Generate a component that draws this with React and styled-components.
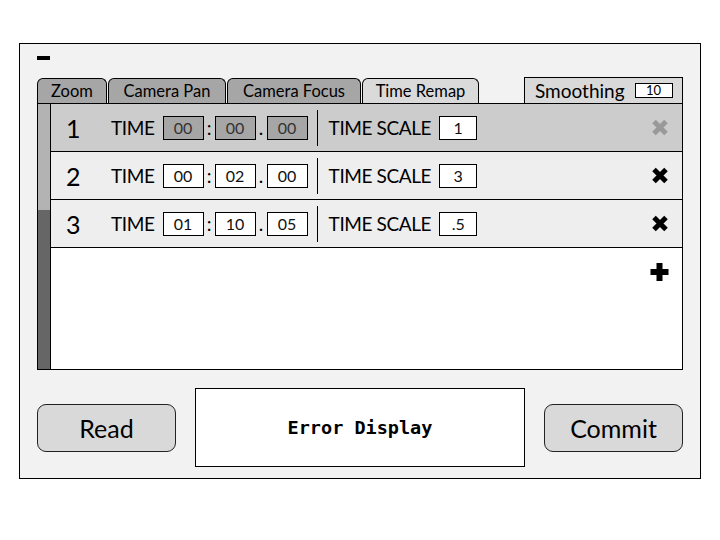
import React from "react";
import styled, { createGlobalStyle } from "styled-components";

const GlobalStyle = createGlobalStyle`
    body {
        margin: 0;
        background: #ffffff;
        font-family: "Lato", "Noto Sans", sans-serif;
        color: #000;
    }
`;

const rows = [
    { id: 1, time: ["00", "00", "00"], scale: "1", selected: true },
    { id: 2, time: ["00", "02", "00"], scale: "3" },
    { id: 3, time: ["01", "10", "05"], scale: ".5" },
];

const tabs = ["Zoom", "Camera Pan", "Camera Focus", "Time Remap"];
const tabWidths = [70, 118, 134, 117];

const CrossIcon = ({ color }) => (
    <svg width="18" height="17" viewBox="0 0 18 17">
        <path d="M3 2.5 L15 14.5 M15 2.5 L3 14.5" stroke={color} strokeWidth="5" />
    </svg>
);

const PlusIcon = () => (
    <svg width="19" height="18" viewBox="0 0 19 18">
        <rect x="6.5" y="0" width="6" height="18" fill="#000" />
        <rect x="0.5" y="6" width="18" height="6" fill="#000" />
    </svg>
);

const App = () => {
    return (
        <>
            <GlobalStyle />
            <Window>
                <Minimize />
                <Header>
                    <Tabs>
                        {tabs.map((t, i) => (
                            <Tab key={t} $w={tabWidths[i]} $active={t === "Time Remap"}>
                                {t}
                            </Tab>
                        ))}
                    </Tabs>
                    <Smoothing>
                        Smoothing
                        <SmallInput>10</SmallInput>
                    </Smoothing>
                </Header>
                <Panel>
                    <Scrollbar>
                        <Thumb />
                    </Scrollbar>
                    <List>
                        {rows.map((r) => (
                            <Row key={r.id} $selected={r.selected}>
                                <Num>{r.id}</Num>
                                <Label>TIME</Label>
                                <Field $dim={r.selected}>{r.time[0]}</Field>
                                <Punct>:</Punct>
                                <Field $dim={r.selected}>{r.time[1]}</Field>
                                <Punct>.</Punct>
                                <Field $dim={r.selected}>{r.time[2]}</Field>
                                <Divider />
                                <Label>TIME SCALE</Label>
                                <Field $w={38}>{r.scale}</Field>
                                <IconCell>
                                    <CrossIcon color={r.selected ? "#999" : "#000"} />
                                </IconCell>
                            </Row>
                        ))}
                        <AddRow>
                            <PlusIcon />
                        </AddRow>
                    </List>
                </Panel>
                <Footer>
                    <Button>Read</Button>
                    <ErrorBox>Error Display</ErrorBox>
                    <Button>Commit</Button>
                </Footer>
            </Window>
        </>
    );
};

const Window = styled.div`
    box-sizing: border-box;
    margin: 43px 0 0 19px;
    width: 682px;
    height: 436px;
    border: 1px solid #000;
    background: #f2f2f2;
    padding: 12px 17px 0 17px;
`;

const Minimize = styled.div`
    width: 13px;
    height: 4px;
    background: #000;
`;

const Header = styled.div`
    display: flex;
    justify-content: space-between;
    align-items: flex-end;
    margin-top: 17px;
    height: 26px;
`;

const Tabs = styled.div`
    display: flex;
    gap: 1px;
`;

const Tab = styled.div`
    box-sizing: border-box;
    width: ${(p) => p.$w}px;
    height: 25px;
    border: 1px solid #000;
    border-bottom: none;
    border-radius: 6px 6px 0 0;
    background: ${(p) => (p.$active ? "#dadada" : "#a6a6a6")};
    font-size: 16.5px;
    line-height: 25px;
    text-align: center;
    white-space: nowrap;
`;

const Smoothing = styled.div`
    box-sizing: border-box;
    width: 159px;
    height: 26px;
    border: 1px solid #000;
    border-bottom: none;
    background: #d9d9d9;
    display: flex;
    align-items: center;
    padding-left: 10px;
    font-size: 19px;
`;

const SmallInput = styled.div`
    box-sizing: border-box;
    margin-left: 10px;
    width: 38px;
    height: 15px;
    border: 1px solid #000;
    background: #fff;
    font-size: 13px;
    line-height: 13px;
    text-align: center;
`;

const Panel = styled.div`
    box-sizing: border-box;
    display: flex;
    height: 267px;
    border: 1px solid #000;
    background: #fff;
`;

const Scrollbar = styled.div`
    width: 12px;
    border-right: 1px solid #000;
    background: #666;
`;

const Thumb = styled.div`
    height: 106px;
    background: #b3b3b3;
`;

const List = styled.div`
    flex: 1;
    display: flex;
    flex-direction: column;
`;

const Row = styled.div`
    display: flex;
    align-items: center;
    height: 47px;
    border-bottom: 1px solid #000;
    background: ${(p) => (p.$selected ? "#cccccc" : "#eeeeee")};
    padding-left: 15px;
`;

const Num = styled.div`
    width: 45px;
    font-size: 25px;
`;

const Label = styled.div`
    font-size: 19px;
    letter-spacing: -0.4px;
    margin-right: 8px;
`;

const Field = styled.div`
    box-sizing: border-box;
    width: ${(p) => p.$w || 41}px;
    height: 24px;
    border: 1px solid #000;
    background: ${(p) => (p.$dim ? "#a6a6a6" : "#fff")};
    color: ${(p) => (p.$dim ? "#333" : "#111")};
    font-size: 16px;
    line-height: 22px;
    text-align: center;
`;

const Punct = styled.div`
    width: 11px;
    text-align: center;
    font-size: 19px;
`;

const Divider = styled.div`
    width: 1px;
    height: 36px;
    background: #000;
    margin: 0 11px 0 9px;
`;

const IconCell = styled.div`
    margin-left: auto;
    margin-right: 13px;
    display: flex;
`;

const AddRow = styled.div`
    display: flex;
    justify-content: flex-end;
    padding: 15px 13px 0 0;
`;

const Footer = styled.div`
    display: flex;
    justify-content: space-between;
    align-items: center;
    margin-top: 18px;
    height: 79px;
`;

const Button = styled.div`
    box-sizing: border-box;
    width: 139px;
    height: 48px;
    border: 1px solid #222;
    border-radius: 9px;
    background: #d9d9d9;
    font-size: 25px;
    line-height: 46px;
    text-align: center;
`;

const ErrorBox = styled.div`
    box-sizing: border-box;
    width: 330px;
    height: 79px;
    border: 1px solid #000;
    background: #fff;
    font-family: "DejaVu Sans Mono", monospace;
    font-weight: bold;
    font-size: 18.5px;
    display: flex;
    align-items: center;
    justify-content: center;
`;

export default App;
